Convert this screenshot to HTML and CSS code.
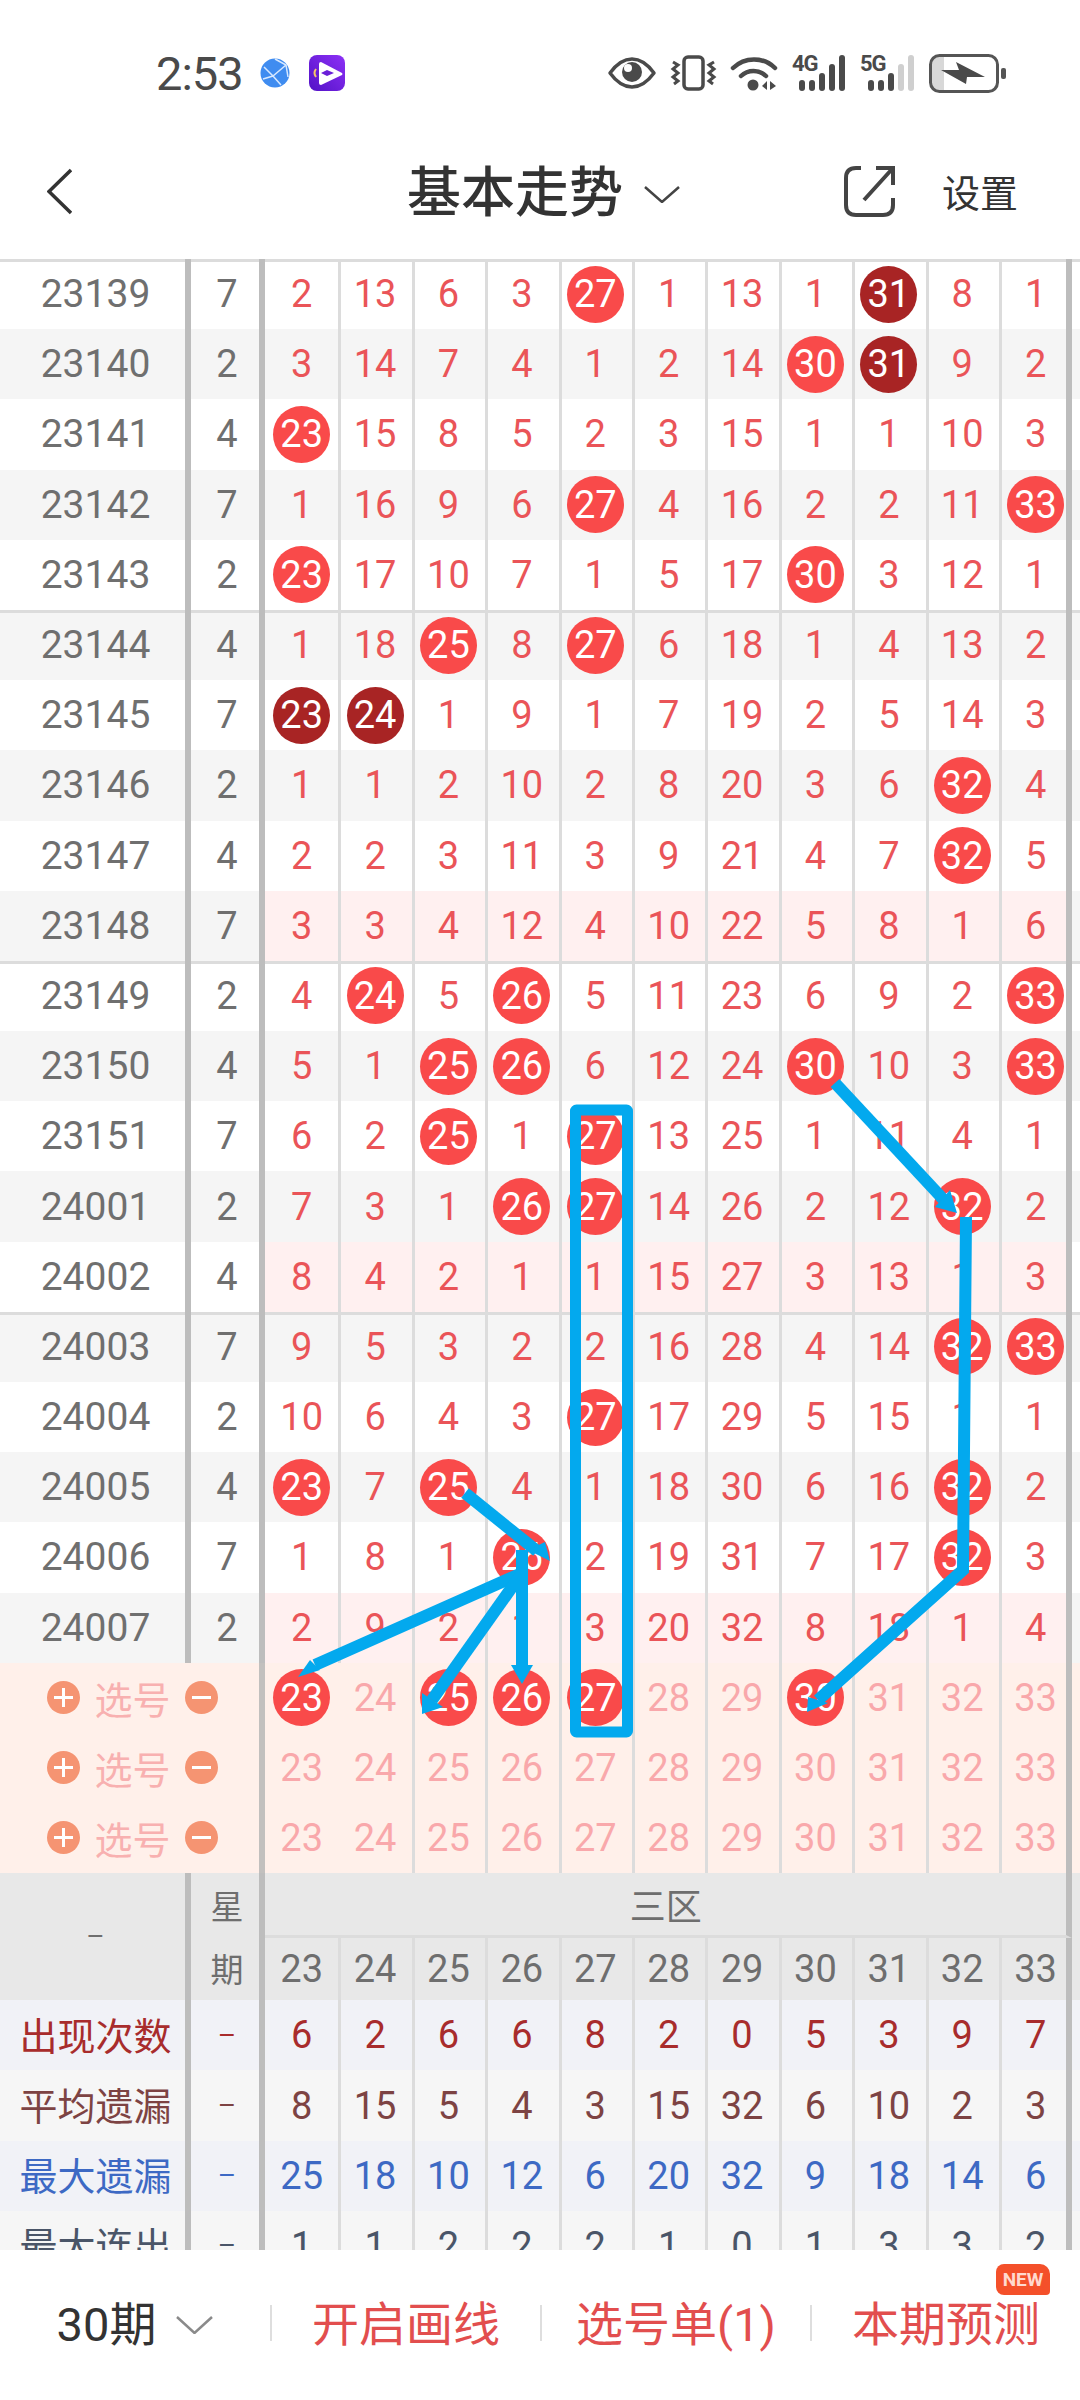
FILE: index.html
```html
<!DOCTYPE html>
<html>

<head>
    <meta charset="UTF-8">
    <meta name="viewport" content="width=device-width, initial-scale=1">
    <title>基本走势</title>
    <link rel="stylesheet" href="styles.css">
</head>

<body>
    <div class="page">
        <!-- status bar -->
        <div class="status">
            <span class="time">2:53</span>
            <svg class="globe" width="30" height="30" viewBox="0 0 30 30">
                <circle cx="15" cy="15" r="14.5" fill="#3f8cf0" />
                <path d="M4 9 L13 18 L26 7 M13 18 L21 27 M13 18 L3 21 M15 1 L26 7 L28 19" fill="none" stroke="#d7e8ff" stroke-width="1.5" />
            </svg>
            <svg class="app" width="36" height="36" viewBox="0 0 36 36">
                <defs>
                    <linearGradient id="appfill" x1="1" y1="0" x2="0" y2="1">
                        <stop offset="0" stop-color="#8d30f6" />
                        <stop offset="1" stop-color="#5212c6" />
                    </linearGradient>
                </defs>
                <rect width="36" height="36" rx="8" fill="url(#appfill)" />
                <path d="M12 7 L33 18 Q34 19 33 20 L12 30 Q10 30 10 28 L10 9 Q10 7 12 7Z" fill="#fff" />
                <path d="M12 18 L18 15 L25 18 L18 21Z" fill="#6a1fd8" />
                <path d="M7 14 Q4 18 7 22" fill="none" stroke="#f6c667" stroke-width="2" />
            </svg>
            <div class="status-right">
                <svg width="48" height="32" viewBox="0 0 48 32">
                    <path d="M2 16 C10 5 18 2 24 2 S38 5 46 16 C38 27 30 30 24 30 S10 27 2 16Z" fill="none" stroke="#4a4a4a" stroke-width="3.5" stroke-linejoin="round" />
                    <circle cx="24" cy="15" r="10" fill="#4a4a4a" />
                    <circle cx="20" cy="11" r="4" fill="#fff" />
                </svg>
                <svg width="45" height="36" viewBox="0 0 45 36">
                    <rect x="13" y="2" width="19" height="32" rx="4" fill="none" stroke="#4a4a4a" stroke-width="3.5" />
                    <path d="M2 7 L7 10 L2 14 L7 18 L2 22 L7 26 L3 29 M43 7 L38 10 L43 14 L38 18 L43 22 L38 26 L42 29" fill="none" stroke="#4a4a4a" stroke-width="3" />
                </svg>
                <svg width="46" height="36" viewBox="0 0 46 36">
                    <path d="M2 13 A30 30 0 0 1 44 13 M10 21 A18 18 0 0 1 35 21" fill="none" stroke="#4a4a4a" stroke-width="4.5" stroke-linecap="round" />
                    <circle cx="22" cy="30" r="5.5" fill="#4a4a4a" />
                    <path d="M36 26 L36 35 L31 31Z M39 26 L45 31 L39 35Z" fill="#4a4a4a" />
                </svg>
                <svg width="53" height="36" viewBox="0 0 53 36">
                    <text class="net" x="0" y="16">4G</text>
                    <rect x="7" y="25" width="6" height="11" rx="3" fill="#4a4a4a" />
                    <rect x="17" y="25" width="6" height="11" rx="3" fill="#4a4a4a" />
                    <rect x="27" y="18" width="6" height="18" rx="3" fill="#4a4a4a" />
                    <rect x="37" y="9" width="6" height="27" rx="3" fill="#4a4a4a" />
                    <rect x="47" y="0" width="6" height="36" rx="3" fill="#4a4a4a" />
                </svg>
                <svg width="54" height="36" viewBox="0 0 54 36">
                    <text class="net" x="0" y="16">5G</text>
                    <rect x="8" y="25" width="6" height="11" rx="3" fill="#4a4a4a" />
                    <rect x="18" y="25" width="6" height="11" rx="3" fill="#4a4a4a" />
                    <rect x="28" y="18" width="6" height="18" rx="3" fill="#4a4a4a" />
                    <rect x="38" y="9" width="6" height="27" rx="3" fill="#cfcfcf" />
                    <rect x="48" y="0" width="6" height="36" rx="3" fill="#cfcfcf" />
                </svg>
                <svg width="77" height="39" viewBox="0 0 77 39">
                    <rect x="3" y="3" width="12" height="33" fill="#d8d8d8" />
                    <rect x="1.5" y="1.5" width="67" height="36" rx="9" fill="none" stroke="#555" stroke-width="3" />
                    <path d="M12 16 L30 16 L27 8 L56 23 L38 23 L37 30Z" fill="#4a4a4a" />
                    <rect x="72" y="14" width="5" height="11" rx="2" fill="#555" />
                </svg>
            </div>
        </div>

        <!-- title bar -->
        <div class="nav">
            <svg class="back" width="25" height="47" viewBox="0 0 25 47">
                <path d="M24 2 L2 23.5 L24 45" fill="none" stroke="#333" stroke-width="3.5" />
            </svg>
            <span class="title">基本走势</span>
            <svg class="title-arrow" width="36" height="17" viewBox="0 0 36 17">
                <path d="M1 1 L18 16 L35 1" fill="none" stroke="#444" stroke-width="2.5" />
            </svg>
            <svg class="share" width="51" height="52" viewBox="0 0 51 52">
                <path d="M17 3 H12 Q2 3 2 13 V40 Q2 50 12 50 H39 Q49 50 49 40 V33" fill="none" stroke="#444" stroke-width="4" />
                <path d="M20 35 L49 3 M32 3 H49 V20" fill="none" stroke="#444" stroke-width="4" />
            </svg>
            <span class="setting">设置</span>
        </div>

        <!-- trend table -->
        <div class="chart">
            <div class="row rule"><span class="p">23139</span><span class="w">7</span><span class="n">2</span><span class="n">13</span><span class="n">6</span><span class="n">3</span><span class="n"><b class="ball">27</b></span><span class="n">1</span><span class="n">13</span><span class="n">1</span><span class="n"><b class="ball dark">31</b></span><span class="n">8</span><span class="n">1</span></div>
            <div class="row alt"><span class="p">23140</span><span class="w">2</span><span class="n">3</span><span class="n">14</span><span class="n">7</span><span class="n">4</span><span class="n">1</span><span class="n">2</span><span class="n">14</span><span class="n"><b class="ball">30</b></span><span class="n"><b class="ball dark">31</b></span><span class="n">9</span><span class="n">2</span></div>
            <div class="row"><span class="p">23141</span><span class="w">4</span><span class="n"><b class="ball">23</b></span><span class="n">15</span><span class="n">8</span><span class="n">5</span><span class="n">2</span><span class="n">3</span><span class="n">15</span><span class="n">1</span><span class="n">1</span><span class="n">10</span><span class="n">3</span></div>
            <div class="row alt"><span class="p">23142</span><span class="w">7</span><span class="n">1</span><span class="n">16</span><span class="n">9</span><span class="n">6</span><span class="n"><b class="ball">27</b></span><span class="n">4</span><span class="n">16</span><span class="n">2</span><span class="n">2</span><span class="n">11</span><span class="n"><b class="ball">33</b></span></div>
            <div class="row"><span class="p">23143</span><span class="w">2</span><span class="n"><b class="ball">23</b></span><span class="n">17</span><span class="n">10</span><span class="n">7</span><span class="n">1</span><span class="n">5</span><span class="n">17</span><span class="n"><b class="ball">30</b></span><span class="n">3</span><span class="n">12</span><span class="n">1</span></div>
            <div class="row alt rule"><span class="p">23144</span><span class="w">4</span><span class="n">1</span><span class="n">18</span><span class="n"><b class="ball">25</b></span><span class="n">8</span><span class="n"><b class="ball">27</b></span><span class="n">6</span><span class="n">18</span><span class="n">1</span><span class="n">4</span><span class="n">13</span><span class="n">2</span></div>
            <div class="row"><span class="p">23145</span><span class="w">7</span><span class="n"><b class="ball dark">23</b></span><span class="n"><b class="ball dark">24</b></span><span class="n">1</span><span class="n">9</span><span class="n">1</span><span class="n">7</span><span class="n">19</span><span class="n">2</span><span class="n">5</span><span class="n">14</span><span class="n">3</span></div>
            <div class="row alt"><span class="p">23146</span><span class="w">2</span><span class="n">1</span><span class="n">1</span><span class="n">2</span><span class="n">10</span><span class="n">2</span><span class="n">8</span><span class="n">20</span><span class="n">3</span><span class="n">6</span><span class="n"><b class="ball">32</b></span><span class="n">4</span></div>
            <div class="row"><span class="p">23147</span><span class="w">4</span><span class="n">2</span><span class="n">2</span><span class="n">3</span><span class="n">11</span><span class="n">3</span><span class="n">9</span><span class="n">21</span><span class="n">4</span><span class="n">7</span><span class="n"><b class="ball">32</b></span><span class="n">5</span></div>
            <div class="row alt pink"><span class="p">23148</span><span class="w">7</span><span class="n">3</span><span class="n">3</span><span class="n">4</span><span class="n">12</span><span class="n">4</span><span class="n">10</span><span class="n">22</span><span class="n">5</span><span class="n">8</span><span class="n">1</span><span class="n">6</span></div>
            <div class="row rule"><span class="p">23149</span><span class="w">2</span><span class="n">4</span><span class="n"><b class="ball">24</b></span><span class="n">5</span><span class="n"><b class="ball">26</b></span><span class="n">5</span><span class="n">11</span><span class="n">23</span><span class="n">6</span><span class="n">9</span><span class="n">2</span><span class="n"><b class="ball">33</b></span></div>
            <div class="row alt"><span class="p">23150</span><span class="w">4</span><span class="n">5</span><span class="n">1</span><span class="n"><b class="ball">25</b></span><span class="n"><b class="ball">26</b></span><span class="n">6</span><span class="n">12</span><span class="n">24</span><span class="n"><b class="ball">30</b></span><span class="n">10</span><span class="n">3</span><span class="n"><b class="ball">33</b></span></div>
            <div class="row"><span class="p">23151</span><span class="w">7</span><span class="n">6</span><span class="n">2</span><span class="n"><b class="ball">25</b></span><span class="n">1</span><span class="n"><b class="ball">27</b></span><span class="n">13</span><span class="n">25</span><span class="n">1</span><span class="n">11</span><span class="n">4</span><span class="n">1</span></div>
            <div class="row alt"><span class="p">24001</span><span class="w">2</span><span class="n">7</span><span class="n">3</span><span class="n">1</span><span class="n"><b class="ball">26</b></span><span class="n"><b class="ball">27</b></span><span class="n">14</span><span class="n">26</span><span class="n">2</span><span class="n">12</span><span class="n"><b class="ball">32</b></span><span class="n">2</span></div>
            <div class="row pink"><span class="p">24002</span><span class="w">4</span><span class="n">8</span><span class="n">4</span><span class="n">2</span><span class="n">1</span><span class="n">1</span><span class="n">15</span><span class="n">27</span><span class="n">3</span><span class="n">13</span><span class="n">1</span><span class="n">3</span></div>
            <div class="row alt rule"><span class="p">24003</span><span class="w">7</span><span class="n">9</span><span class="n">5</span><span class="n">3</span><span class="n">2</span><span class="n">2</span><span class="n">16</span><span class="n">28</span><span class="n">4</span><span class="n">14</span><span class="n"><b class="ball">32</b></span><span class="n"><b class="ball">33</b></span></div>
            <div class="row"><span class="p">24004</span><span class="w">2</span><span class="n">10</span><span class="n">6</span><span class="n">4</span><span class="n">3</span><span class="n"><b class="ball">27</b></span><span class="n">17</span><span class="n">29</span><span class="n">5</span><span class="n">15</span><span class="n">1</span><span class="n">1</span></div>
            <div class="row alt"><span class="p">24005</span><span class="w">4</span><span class="n"><b class="ball">23</b></span><span class="n">7</span><span class="n"><b class="ball">25</b></span><span class="n">4</span><span class="n">1</span><span class="n">18</span><span class="n">30</span><span class="n">6</span><span class="n">16</span><span class="n"><b class="ball">32</b></span><span class="n">2</span></div>
            <div class="row"><span class="p">24006</span><span class="w">7</span><span class="n">1</span><span class="n">8</span><span class="n">1</span><span class="n"><b class="ball">26</b></span><span class="n">2</span><span class="n">19</span><span class="n">31</span><span class="n">7</span><span class="n">17</span><span class="n"><b class="ball">32</b></span><span class="n">3</span></div>
            <div class="row alt pink"><span class="p">24007</span><span class="w">2</span><span class="n">2</span><span class="n">9</span><span class="n">2</span><span class="n">1</span><span class="n">3</span><span class="n">20</span><span class="n">32</span><span class="n">8</span><span class="n">18</span><span class="n">1</span><span class="n">4</span></div>

            <!-- pick rows -->
            <div class="row pick"><span class="pick-label"><i class="round plus"></i>选号<i class="round minus"></i></span><span class="n"><b class="ball">23</b></span><span class="n">24</span><span class="n"><b class="ball">25</b></span><span class="n"><b class="ball">26</b></span><span class="n"><b class="ball">27</b></span><span class="n">28</span><span class="n">29</span><span class="n"><b class="ball">30</b></span><span class="n">31</span><span class="n">32</span><span class="n">33</span></div>
            <div class="row pick"><span class="pick-label"><i class="round plus"></i>选号<i class="round minus"></i></span><span class="n">23</span><span class="n">24</span><span class="n">25</span><span class="n">26</span><span class="n">27</span><span class="n">28</span><span class="n">29</span><span class="n">30</span><span class="n">31</span><span class="n">32</span><span class="n">33</span></div>
            <div class="row pick"><span class="pick-label"><i class="round plus"></i>选号<i class="round minus"></i></span><span class="n">23</span><span class="n">24</span><span class="n">25</span><span class="n">26</span><span class="n">27</span><span class="n">28</span><span class="n">29</span><span class="n">30</span><span class="n">31</span><span class="n">32</span><span class="n">33</span></div>

            <!-- stats header -->
            <div class="head">
                <span class="head-blank">–</span>
                <span class="head-week"><span>星</span><span>期</span></span>
                <div class="head-nums">
                    <div class="zone">三区</div>
                    <div class="head-row"><span class="n">23</span><span class="n">24</span><span class="n">25</span><span class="n">26</span><span class="n">27</span><span class="n">28</span><span class="n">29</span><span class="n">30</span><span class="n">31</span><span class="n">32</span><span class="n">33</span></div>
                </div>
            </div>

            <!-- stats -->
            <div class="row stat count"><span class="p"><span class="label">出现次数</span></span><span class="w dash">–</span><span class="n">6</span><span class="n">2</span><span class="n">6</span><span class="n">6</span><span class="n">8</span><span class="n">2</span><span class="n">0</span><span class="n">5</span><span class="n">3</span><span class="n">9</span><span class="n">7</span></div>
            <div class="row stat avg"><span class="p"><span class="label">平均遗漏</span></span><span class="w dash">–</span><span class="n">8</span><span class="n">15</span><span class="n">5</span><span class="n">4</span><span class="n">3</span><span class="n">15</span><span class="n">32</span><span class="n">6</span><span class="n">10</span><span class="n">2</span><span class="n">3</span></div>
            <div class="row stat max"><span class="p"><span class="label">最大遗漏</span></span><span class="w dash">–</span><span class="n">25</span><span class="n">18</span><span class="n">10</span><span class="n">12</span><span class="n">6</span><span class="n">20</span><span class="n">32</span><span class="n">9</span><span class="n">18</span><span class="n">14</span><span class="n">6</span></div>
            <div class="row stat streak"><span class="p"><span class="label">最大连出</span></span><span class="w dash">–</span><span class="n">1</span><span class="n">1</span><span class="n">2</span><span class="n">2</span><span class="n">2</span><span class="n">1</span><span class="n">0</span><span class="n">1</span><span class="n">3</span><span class="n">3</span><span class="n">2</span></div>
        </div>

        <!-- bottom bar -->
        <div class="footer">
            <div class="foot-item period">30期
                <svg width="37" height="18" viewBox="0 0 37 18">
                    <path d="M1 1 L18.5 17 L36 1" fill="none" stroke="#8a8a8a" stroke-width="2.5" />
                </svg>
            </div>
            <div class="foot-item">开启画线</div>
            <div class="foot-item">选号单(1)</div>
            <div class="foot-item">本期预测<span class="new">NEW</span></div>
        </div>

        <!-- hand drawn lines on top of the table -->
        <svg class="marks" width="1080" height="2400" viewBox="0 0 1080 2400">
            <rect x="575.5" y="1110" width="52" height="622" rx="1" fill="none" stroke="#03a9ee" stroke-width="11" stroke-linejoin="round" />
            <g fill="none" stroke="#03a9ee" stroke-width="12">
                <path d="M465 1493 L537 1551" />
                <path d="M522 1573 L315 1665" />
                <path d="M522 1573 L432 1700" />
                <path d="M522 1550 L522 1670" />
                <path d="M835 1083 L943 1199" />
                <path d="M966 1217 L963 1570 L818 1700" />
            </g>
            <g fill="#03a9ee">
                <path d="M550 1561 L528 1550 L545 1542Z" />
                <path d="M298 1677 L310 1660 L320 1670Z" />
                <path d="M422 1714 L422 1693 L443 1707Z" />
                <path d="M522 1684 L511 1665 L533 1665Z" />
                <path d="M957 1213 L935 1207 L950 1190Z" />
                <path d="M807 1712 L808 1697 L828 1703Z" />
            </g>
        </svg>
    </div>
</body>

</html>
```

FILE: styles.css
```css
* {
    box-sizing: border-box;
}

body {
    margin: 0px;
    background-color: white;
    font-family: Roboto, "Noto Sans CJK SC", sans-serif;
}

.page {
    position: relative;
    width: 1080px;
    height: 2400px;
    overflow: hidden;
}

/* status bar */
.status {
    display: flex;
    align-items: center;
    height: 130px;
    padding: 16px 74px 0 156px;
}

.time {
    font-size: 47px;
    letter-spacing: -1px;
    color: #4a4a4a;
}

.globe {
    margin-left: 17px;
}

.app {
    margin-left: 19px;
}

.status-right {
    display: flex;
    align-items: center;
    gap: 15px;
    margin-left: auto;
}

.status-right svg {
    overflow: visible;
}

.net {
    font-family: Roboto, sans-serif;
    font-size: 22px;
    font-weight: 700;
    letter-spacing: -1px;
    fill: #4a4a4a;
}

/* title bar */
.nav {
    display: flex;
    align-items: center;
    height: 129px;
    padding: 0 62px 7px 47px;
    color: #333;
}

.title {
    margin-left: 335px;
    margin-bottom: 5px;
    font-size: 54px;
    font-weight: 500;
}

.title-arrow {
    margin-left: 21px;
    margin-top: 6px;
}

.share {
    margin-left: auto;
}

.setting {
    margin-left: 47px;
    margin-bottom: 2px;
    font-size: 38px;
}

/* table */
.chart {
    height: 1991px;
    overflow: hidden;
}

.row {
    display: flex;
    height: 70.2px;
    font-size: 38px;
}

.rule {
    box-shadow: inset 0 3px 0 #dcdcdc;
}

.alt {
    background-color: #f5f5f5;
}

.p {
    display: flex;
    align-items: center;
    justify-content: center;
    width: 191px;
    padding-left: 6px;
    border-right: 6px solid #bdbdbd;
    font-size: 39px;
    color: #6f6f6f;
}

.w {
    display: flex;
    align-items: center;
    justify-content: center;
    width: 74px;
    padding-left: 4px;
    border-right: 6px solid #bdbdbd;
    color: #6f6f6f;
}

.n {
    display: flex;
    align-items: center;
    justify-content: center;
    width: 73.4px;
    padding-right: 3px;
    border-left: 3px solid #dcdcdc;
    color: #ea5458;
}

.row > .n:nth-child(3),
.pick > .n:nth-child(2),
.head-row > .n:first-child {
    padding-right: 0;
    border-left: 0;
}

.row > .n:last-child,
.head-row > .n:last-child {
    padding-right: 0;
    padding-left: 3px;
    border-right: 6px solid #bdbdbd;
}

.pink .n {
    background-color: #fff0f0;
}

.ball {
    display: flex;
    flex-shrink: 0;
    align-items: center;
    justify-content: center;
    width: 57px;
    height: 57px;
    border-radius: 50%;
    background-color: #f94a4a;
    color: white;
    font-weight: 400;
}

.dark {
    background-color: #a82424;
}

/* pick rows */
.pick {
    height: 70px;
    background-color: #fff0ea;
}

.pick .n {
    color: #f9a8ab;
}

.pick-label {
    display: flex;
    align-items: center;
    justify-content: center;
    gap: 14px;
    width: 265px;
    padding-left: 6px;
    border-right: 6px solid #c2c0be;
    font-size: 38px;
    color: #f8b0b0;
}

.round {
    width: 33px;
    height: 33px;
    border-radius: 50%;
    background-color: #f59472;
    background-repeat: no-repeat;
    background-position: center;
}

.plus {
    background-image: linear-gradient(white, white), linear-gradient(white, white);
    background-size: 19px 3px, 3px 19px;
}

.minus {
    background-image: linear-gradient(white, white);
    background-size: 19px 3px;
}

/* stats header */
.head {
    display: flex;
    height: 127.5px;
    background-color: #e8e8e8;
    color: #6e6e6e;
}

.head-blank {
    display: flex;
    align-items: center;
    justify-content: center;
    width: 191px;
    padding-left: 6px;
    border-right: 6px solid #bdbdbd;
    font-size: 28px;
}

.head-week {
    display: flex;
    flex-direction: column;
    width: 74px;
    padding-left: 4px;
    border-right: 6px solid #bdbdbd;
    font-size: 33px;
}

.head-week span {
    flex: 1;
    display: flex;
    align-items: center;
    justify-content: center;
}

.zone {
    display: flex;
    align-items: center;
    justify-content: center;
    height: 65.5px;
    border-right: 6px solid #bdbdbd;
    border-bottom: 3px solid #dcdcdc;
    font-size: 36px;
}

.head-row {
    display: flex;
    height: 62px;
    font-size: 38px;
}

.head-row .n {
    color: #6e6e6e;
}

/* stats */
.stat .p {
    font-size: 38px;
}

.label {
    margin-bottom: 4px;
}

.dash {
    font-size: 28px;
}

.count {
    background-color: #f1f2f7;
}

.count .p,
.count .w,
.count .n {
    color: #a82c2c;
}

.avg {
    background-color: #f6f6f6;
}

.avg .p,
.avg .w,
.avg .n {
    color: #7d4343;
}

.max {
    background-color: #f1f2f7;
}

.max .p,
.max .w,
.max .n {
    color: #3d69c4;
}

.streak {
    background-color: #f6f6f6;
}

.streak .p,
.streak .w,
.streak .n {
    color: #4a5568;
}

/* bottom bar */
.footer {
    display: flex;
    align-items: center;
    height: 150px;
    padding-bottom: 4px;
    background-color: white;
}

.foot-item {
    position: relative;
    display: flex;
    align-items: center;
    justify-content: center;
    width: 270px;
    height: 36px;
    padding-bottom: 5px;
    border-left: 2px solid #dedede;
    font-size: 47px;
    color: #e24e4e;
}

.period {
    gap: 20px;
    border-left: 0;
    color: #333;
}

.period svg {
    margin-top: 9px;
}

.new {
    position: absolute;
    top: -41px;
    right: 30px;
    display: flex;
    align-items: center;
    justify-content: center;
    width: 54px;
    height: 31px;
    border-radius: 8px 10px 4px 8px;
    background-color: #f4502a;
    font-size: 19px;
    font-weight: 700;
    color: #ffd9cf;
}

/* drawn lines */
.marks {
    position: absolute;
    top: 0;
    left: 0;
    pointer-events: none;
}
```
